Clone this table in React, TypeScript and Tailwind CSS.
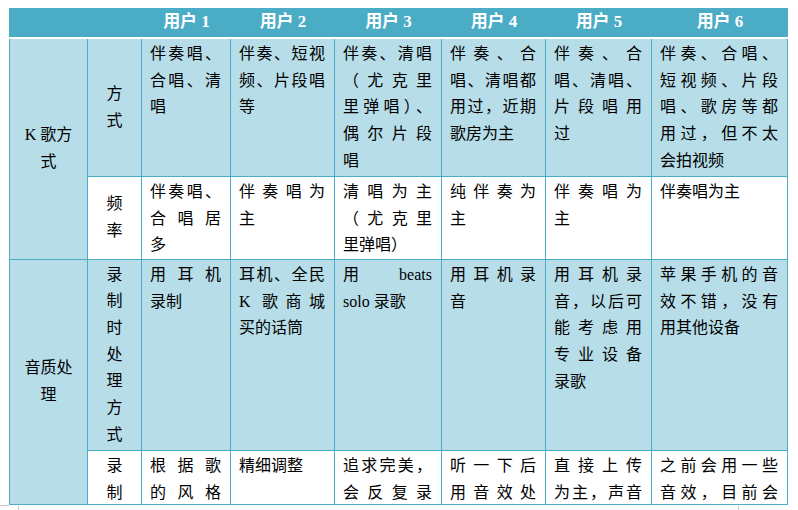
import React from 'react';

const cols = 'grid-cols-[78px_54px_89px_104px_107px_104px_106px_136px]';
const blue = 'bg-[#b7dde8]';
const white = 'bg-white';

type CellProps = {
  lines: string[];
  bg: string;
  span?: boolean;
  center?: boolean;
  justifyAll?: boolean;
};

// one table cell, lines broken the same way as the source document
const Cell: React.FC<CellProps> = ({ lines, bg, span, center, justifyAll }) => {
  if (center) {
    return (
      <div
        className={`${bg} ${span ? 'row-span-2' : ''} border-r border-b border-[#4bacc6] flex flex-col items-center justify-center text-center overflow-hidden`}
      >
        {lines.map((l, i) => (
          <div key={i}>{l}</div>
        ))}
      </div>
    );
  }
  return (
    <div className={`${bg} border-r border-b border-[#4bacc6] pl-[8px] pr-[9px] pt-[2px] overflow-hidden`}>
      {lines.map((l, i) => {
        const last = i === lines.length - 1;
        return (
          <div
            key={i}
            className={last && !justifyAll ? 'text-left whitespace-nowrap' : 'text-justify [text-align-last:justify] whitespace-nowrap'}
          >
            {l}
          </div>
        );
      })}
    </div>
  );
};

const users = ['用户 1', '用户 2', '用户 3', '用户 4', '用户 5', '用户 6'];

const row1 = [
  ['伴奏唱、', '合唱、清', '唱'],
  ['伴奏、短视', '频、片段唱', '等'],
  ['伴奏、清唱', '（尤克里', '里弹唱）、', '偶尔片段', '唱'],
  ['伴奏、合', '唱、清唱都', '用过，近期', '歌房为主'],
  ['伴奏、合', '唱、清唱、', '片段唱用', '过'],
  ['伴奏、合唱、', '短视频、片段', '唱、歌房等都', '用过，但不太', '会拍视频'],
];

const row2 = [
  ['伴奏唱、', '合唱居', '多'],
  ['伴奏唱为', '主'],
  ['清唱为主', '（尤克里', '里弹唱）'],
  ['纯伴奏为', '主'],
  ['伴奏唱为', '主'],
  ['伴奏唱为主'],
];

const row3 = [
  ['用耳机', '录制'],
  ['耳机、全民', 'K 歌商城', '买的话筒'],
  ['用 beats', 'solo 录歌'],
  ['用耳机录', '音'],
  ['用耳机录', '音，以后可', '能考虑用', '专业设备', '录歌'],
  ['苹果手机的音', '效不错，没有', '用其他设备'],
];

const row4 = [
  ['根据歌', '的风格'],
  ['精细调整'],
  ['追求完美，', '会反复录'],
  ['听一下后', '用音效处'],
  ['直接上传', '为主，声音'],
  ['之前会用一些', '音效，目前会'],
];

export default function App() {
  return (
    <div className="w-[798px] h-[510px] bg-white pt-[8px] overflow-hidden font-['Liberation_Serif','Noto_Sans_CJK_SC',serif] text-[16px] leading-[26.67px] text-black">
      {/* header band */}
      <div className={`ml-[9px] w-[779px] h-[29px] bg-[#4bacc6] pl-px grid ${cols} items-center`}>
        <div />
        <div />
        {users.map((u) => (
          <div key={u} className="text-center text-white font-bold text-[17px]">
            {u}
          </div>
        ))}
      </div>

      <div className={`mt-[2px] ml-[9px] w-[779px] border-l border-[#4bacc6] grid ${cols} grid-rows-[138px_83px_191px_54px]`}>
        <Cell lines={['K 歌方', '式']} bg={blue} span center />
        <Cell lines={['方', '式']} bg={blue} center />
        {row1.map((l, i) => (
          <Cell key={`a${i}`} lines={l} bg={blue} />
        ))}

        <Cell lines={['频', '率']} bg={white} center />
        {row2.map((l, i) => (
          <Cell key={`b${i}`} lines={l} bg={white} />
        ))}

        <Cell lines={['音质处', '理']} bg={blue} span center />
        <Cell lines={['录', '制', '时', '处', '理', '方', '式']} bg={blue} center />
        {row3.map((l, i) => (
          <Cell key={`c${i}`} lines={l} bg={blue} />
        ))}

        <div className={`${white} border-r border-b border-[#4bacc6] pt-[2px] text-center overflow-hidden`}>
          <div>录</div>
          <div>制</div>
        </div>
        {row4.map((l, i) => (
          <Cell key={`d${i}`} lines={l} bg={white} justifyAll={i !== 1} />
        ))}
      </div>

      {/* page corner marks */}
      <div className="flex h-[5px]">
        <div className="w-[9px] h-px bg-[#c8c8c8]" />
        <div className="ml-[9px] mt-px w-px h-[4px] bg-[#c8c8c8]" />
        <div className="ml-[719px] mt-px w-px h-[4px] bg-[#c8c8c8]" />
      </div>
    </div>
  );
}
